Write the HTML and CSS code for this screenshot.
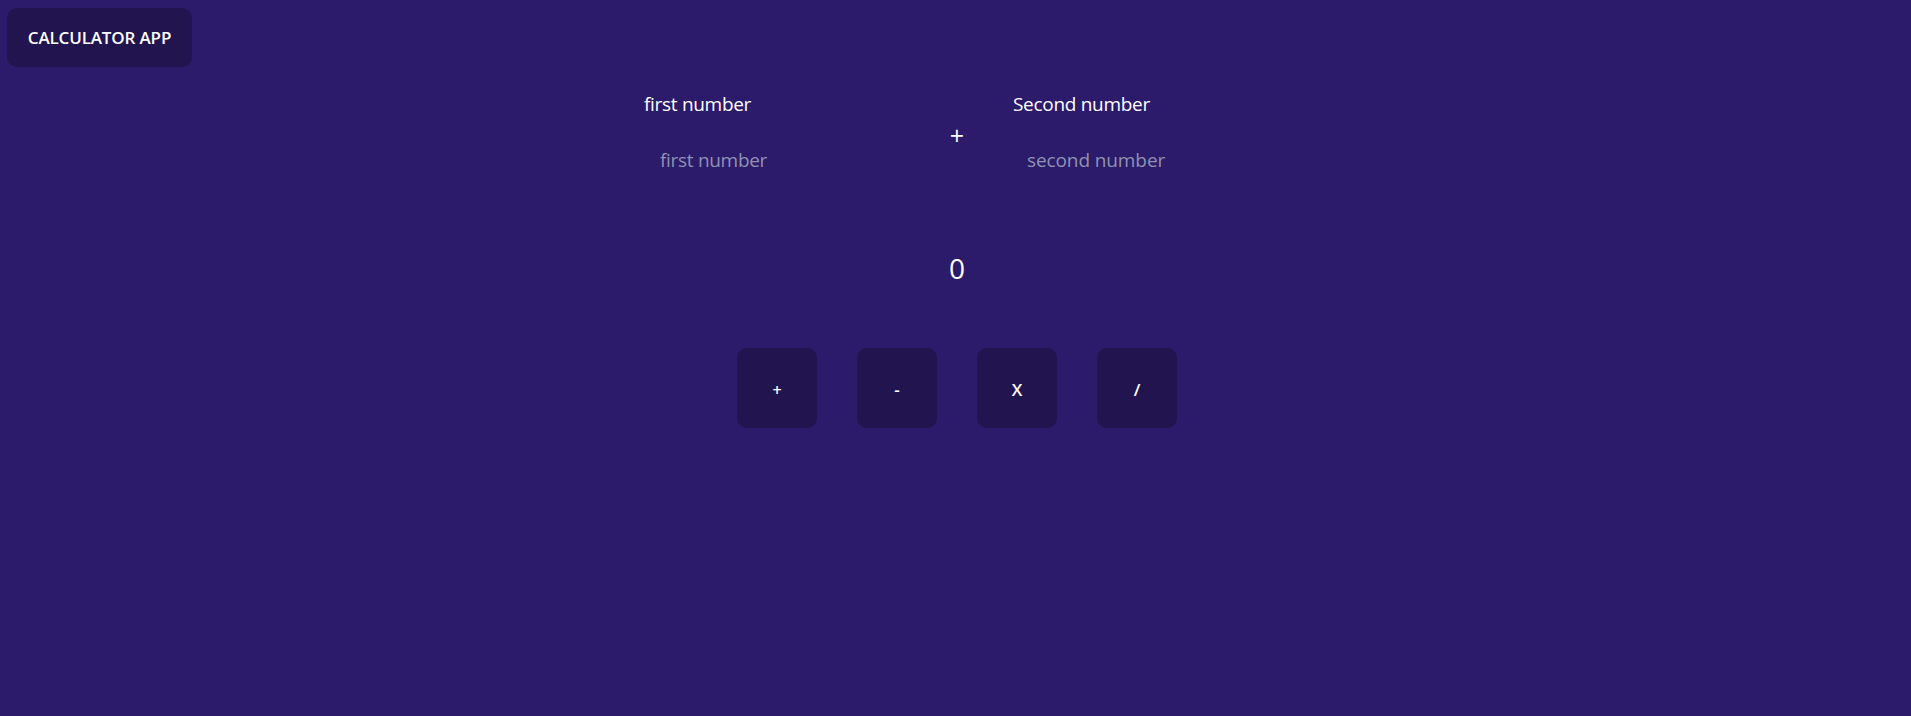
FILE: index.html
```html
<!DOCTYPE html>
<html lang="en">
<head>
<meta charset="utf-8">
<title>Calculator App</title>
<link rel="stylesheet" href="styles.css">
</head>
<body>
<header class="top">
  <button class="brand">CALCULATOR APP</button>
</header>
<main class="calc">
  <div class="inputs">
    <div class="field">
      <label class="field-label" for="a">first number</label>
      <input class="field-input" id="a" type="text" placeholder="first number">
    </div>
    <div class="op">+</div>
    <div class="field">
      <label class="field-label" for="b">Second number</label>
      <input class="field-input second" id="b" type="text" placeholder="second number">
    </div>
  </div>
  <div class="result">0</div>
  <div class="ops">
    <button class="op-btn plus">+</button>
    <button class="op-btn">-</button>
    <button class="op-btn">X</button>
    <button class="op-btn">/</button>
  </div>
</main>
</body>
</html>
```

FILE: styles.css
```css
* { box-sizing: border-box; }

html, body {
  margin: 0;
  height: 100%;
}

body {
  background: #2c1a6a;
  color: #ffffff;
  font-family: "Open Sans", "Noto Sans", sans-serif;
}

.top {
  padding: 8px 0 0 7px;
}

.brand {
  width: 185px;
  height: 59px;
  border: none;
  border-radius: 10px;
  background: #21144f;
  color: #ffffff;
  font-family: "Open Sans", "Noto Sans", sans-serif;
  font-weight: 600;
  font-size: 17px;
  letter-spacing: -0.15px;
  padding: 0;
}

.calc {
  display: flex;
  flex-direction: column;
  align-items: center;
  padding-left: 3px;
}

.inputs {
  margin-top: 25px;
  display: flex;
  align-items: center;
}

.field {
  width: 257px;
  display: flex;
  flex-direction: column;
  align-items: flex-start;
}

.field-label {
  font-size: 19px;
  line-height: 24px;
  letter-spacing: -0.3px;
  color: #ffffff;
}

.field-input {
  margin-top: 20px;
  width: 250px;
  padding: 12px 16px;
  border: none;
  outline: none;
  background: transparent;
  color: #ffffff;
  font-family: "Open Sans", "Noto Sans", sans-serif;
  font-size: 19px;
  line-height: 24px;
  letter-spacing: -0.3px;
}

.field-input.second {
  padding-left: 14px;
  letter-spacing: -0.1px;
}

.field-input::placeholder {
  color: #8e93b3;
  opacity: 1;
}

.op {
  width: 112px;
  text-align: center;
  font-size: 25px;
  line-height: 30px;
  margin-top: -6px;
}

.result {
  margin-top: 66px;
  font-size: 28px;
  line-height: 36px;
}

.ops {
  margin-top: 62px;
  display: flex;
  gap: 40px;
}

.op-btn {
  width: 80px;
  height: 80px;
  border: none;
  border-radius: 10px;
  background: #21144f;
  color: #ffffff;
  font-family: "Open Sans", "Noto Sans", sans-serif;
  font-weight: 600;
  font-size: 17px;
  padding: 3px 0 0;
}

.op-btn.plus {
  font-size: 16px;
}
```
